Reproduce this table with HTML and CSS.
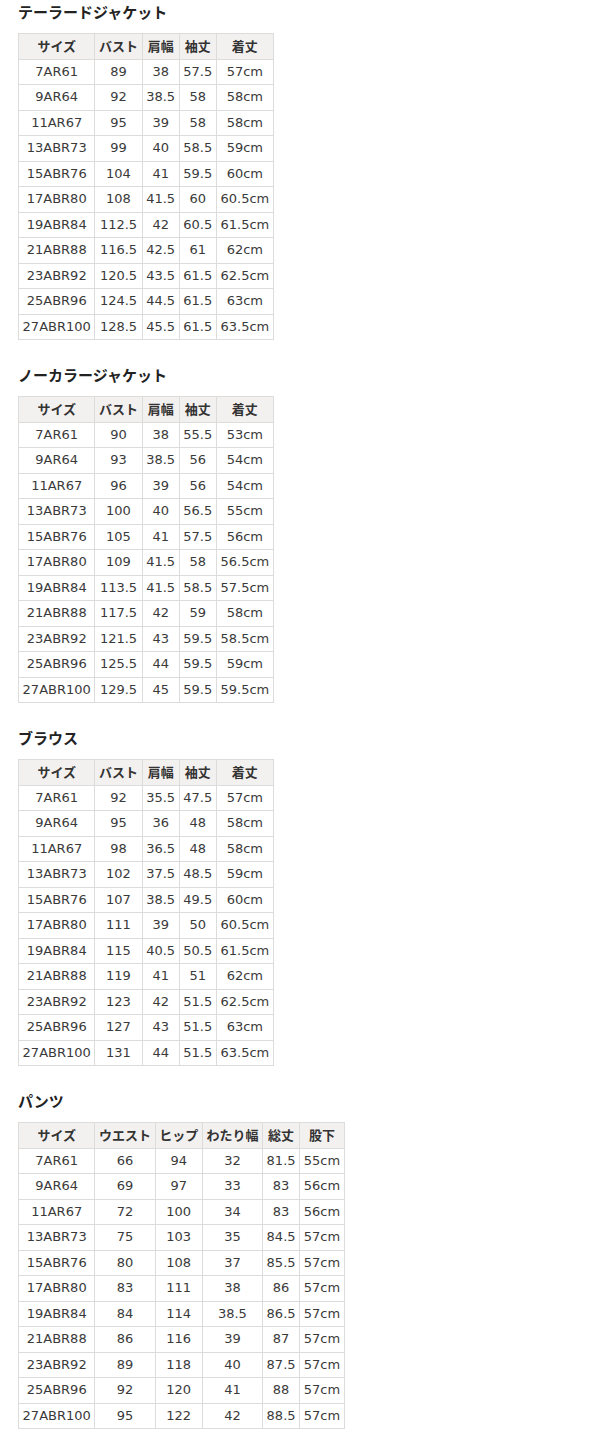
FILE: index.html
```html
<!DOCTYPE html>
<html lang="ja">
<head>
<meta charset="utf-8">
<title>サイズ表</title>
<link rel="stylesheet" href="styles.css">
</head>
<body>
<div class="page">
  <section class="section">
    <h3 class="title">テーラードジャケット</h3>
    <table class="size-table">
      <thead><tr><th>サイズ</th><th>バスト</th><th>肩幅</th><th>袖丈</th><th>着丈</th></tr></thead>
      <tbody>
        <tr><td>7AR61</td><td>89</td><td>38</td><td>57.5</td><td>57cm</td></tr>
        <tr><td>9AR64</td><td>92</td><td>38.5</td><td>58</td><td>58cm</td></tr>
        <tr><td>11AR67</td><td>95</td><td>39</td><td>58</td><td>58cm</td></tr>
        <tr><td>13ABR73</td><td>99</td><td>40</td><td>58.5</td><td>59cm</td></tr>
        <tr><td>15ABR76</td><td>104</td><td>41</td><td>59.5</td><td>60cm</td></tr>
        <tr><td>17ABR80</td><td>108</td><td>41.5</td><td>60</td><td>60.5cm</td></tr>
        <tr><td>19ABR84</td><td>112.5</td><td>42</td><td>60.5</td><td>61.5cm</td></tr>
        <tr><td>21ABR88</td><td>116.5</td><td>42.5</td><td>61</td><td>62cm</td></tr>
        <tr><td>23ABR92</td><td>120.5</td><td>43.5</td><td>61.5</td><td>62.5cm</td></tr>
        <tr><td>25ABR96</td><td>124.5</td><td>44.5</td><td>61.5</td><td>63cm</td></tr>
        <tr><td>27ABR100</td><td>128.5</td><td>45.5</td><td>61.5</td><td>63.5cm</td></tr>
      </tbody>
    </table>
  </section>

  <section class="section">
    <h3 class="title">ノーカラージャケット</h3>
    <table class="size-table">
      <thead><tr><th>サイズ</th><th>バスト</th><th>肩幅</th><th>袖丈</th><th>着丈</th></tr></thead>
      <tbody>
        <tr><td>7AR61</td><td>90</td><td>38</td><td>55.5</td><td>53cm</td></tr>
        <tr><td>9AR64</td><td>93</td><td>38.5</td><td>56</td><td>54cm</td></tr>
        <tr><td>11AR67</td><td>96</td><td>39</td><td>56</td><td>54cm</td></tr>
        <tr><td>13ABR73</td><td>100</td><td>40</td><td>56.5</td><td>55cm</td></tr>
        <tr><td>15ABR76</td><td>105</td><td>41</td><td>57.5</td><td>56cm</td></tr>
        <tr><td>17ABR80</td><td>109</td><td>41.5</td><td>58</td><td>56.5cm</td></tr>
        <tr><td>19ABR84</td><td>113.5</td><td>41.5</td><td>58.5</td><td>57.5cm</td></tr>
        <tr><td>21ABR88</td><td>117.5</td><td>42</td><td>59</td><td>58cm</td></tr>
        <tr><td>23ABR92</td><td>121.5</td><td>43</td><td>59.5</td><td>58.5cm</td></tr>
        <tr><td>25ABR96</td><td>125.5</td><td>44</td><td>59.5</td><td>59cm</td></tr>
        <tr><td>27ABR100</td><td>129.5</td><td>45</td><td>59.5</td><td>59.5cm</td></tr>
      </tbody>
    </table>
  </section>

  <section class="section">
    <h3 class="title">ブラウス</h3>
    <table class="size-table">
      <thead><tr><th>サイズ</th><th>バスト</th><th>肩幅</th><th>袖丈</th><th>着丈</th></tr></thead>
      <tbody>
        <tr><td>7AR61</td><td>92</td><td>35.5</td><td>47.5</td><td>57cm</td></tr>
        <tr><td>9AR64</td><td>95</td><td>36</td><td>48</td><td>58cm</td></tr>
        <tr><td>11AR67</td><td>98</td><td>36.5</td><td>48</td><td>58cm</td></tr>
        <tr><td>13ABR73</td><td>102</td><td>37.5</td><td>48.5</td><td>59cm</td></tr>
        <tr><td>15ABR76</td><td>107</td><td>38.5</td><td>49.5</td><td>60cm</td></tr>
        <tr><td>17ABR80</td><td>111</td><td>39</td><td>50</td><td>60.5cm</td></tr>
        <tr><td>19ABR84</td><td>115</td><td>40.5</td><td>50.5</td><td>61.5cm</td></tr>
        <tr><td>21ABR88</td><td>119</td><td>41</td><td>51</td><td>62cm</td></tr>
        <tr><td>23ABR92</td><td>123</td><td>42</td><td>51.5</td><td>62.5cm</td></tr>
        <tr><td>25ABR96</td><td>127</td><td>43</td><td>51.5</td><td>63cm</td></tr>
        <tr><td>27ABR100</td><td>131</td><td>44</td><td>51.5</td><td>63.5cm</td></tr>
      </tbody>
    </table>
  </section>

  <section class="section">
    <h3 class="title">パンツ</h3>
    <table class="size-table">
      <thead><tr><th>サイズ</th><th>ウエスト</th><th>ヒップ</th><th>わたり幅</th><th>総丈</th><th>股下</th></tr></thead>
      <tbody>
        <tr><td>7AR61</td><td>66</td><td>94</td><td>32</td><td>81.5</td><td>55cm</td></tr>
        <tr><td>9AR64</td><td>69</td><td>97</td><td>33</td><td>83</td><td>56cm</td></tr>
        <tr><td>11AR67</td><td>72</td><td>100</td><td>34</td><td>83</td><td>56cm</td></tr>
        <tr><td>13ABR73</td><td>75</td><td>103</td><td>35</td><td>84.5</td><td>57cm</td></tr>
        <tr><td>15ABR76</td><td>80</td><td>108</td><td>37</td><td>85.5</td><td>57cm</td></tr>
        <tr><td>17ABR80</td><td>83</td><td>111</td><td>38</td><td>86</td><td>57cm</td></tr>
        <tr><td>19ABR84</td><td>84</td><td>114</td><td>38.5</td><td>86.5</td><td>57cm</td></tr>
        <tr><td>21ABR88</td><td>86</td><td>116</td><td>39</td><td>87</td><td>57cm</td></tr>
        <tr><td>23ABR92</td><td>89</td><td>118</td><td>40</td><td>87.5</td><td>57cm</td></tr>
        <tr><td>25ABR96</td><td>92</td><td>120</td><td>41</td><td>88</td><td>57cm</td></tr>
        <tr><td>27ABR100</td><td>95</td><td>122</td><td>42</td><td>88.5</td><td>57cm</td></tr>
      </tbody>
    </table>
  </section>
</div>
</body>
</html>
```

FILE: styles.css
```css
html, body {
  margin: 0;
  padding: 0;
  background: #ffffff;
}

body {
  font-family: "DejaVu Sans", Verdana, "Noto Sans CJK JP", sans-serif;
  color: #333333;
}

.page {
  padding: 3px 0 0 18px;
  display: flex;
  flex-direction: column;
  gap: 26px;
}

.section {
  display: flex;
  flex-direction: column;
  align-items: flex-start;
  gap: 10px;
}

.title {
  margin: 0;
  font-family: "DejaVu Sans", "Noto Sans CJK JP", sans-serif;
  font-size: 15px;
  line-height: 20px;
  font-weight: bold;
  color: #222222;
}

.size-table {
  border-collapse: collapse;
  font-size: 13px;
  line-height: 16.5px;
  color: #3a3a3a;
}

.size-table th,
.size-table td {
  border: 1px solid #dcdcdc;
  padding: 4px 3.6px;
  text-align: center;
  white-space: nowrap;
}

.size-table th {
  background: #f3f1ef;
  font-weight: bold;
  color: #333333;
  font-family: "Noto Sans CJK JP", sans-serif;
}
```
